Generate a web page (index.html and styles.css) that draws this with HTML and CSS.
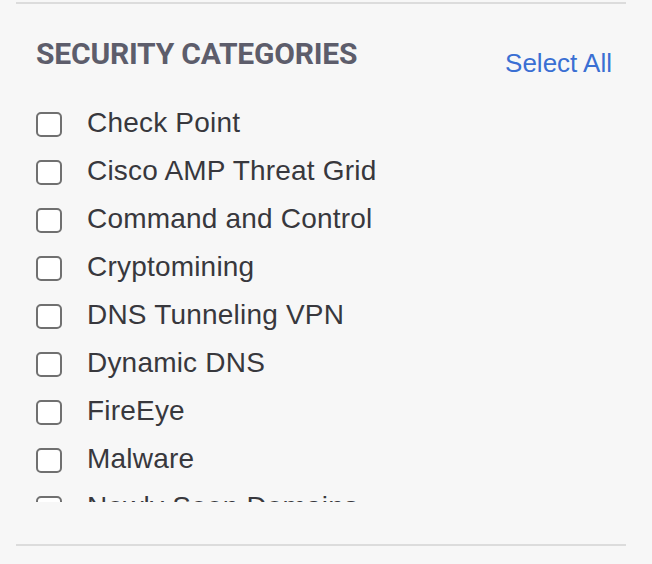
FILE: index.html
```html
<!DOCTYPE html>
<html>
<head>
<meta charset="utf-8">
<link rel="stylesheet" href="styles.css">
</head>
<body>
<section class="panel">
  <div class="panel-header">
    <h2 class="panel-title">SECURITY CATEGORIES</h2>
    <a class="select-all" href="#">Select All</a>
  </div>
  <ul class="cat-list">
    <li class="cat-item"><span class="box"></span><span class="label">Check Point</span></li>
    <li class="cat-item"><span class="box"></span><span class="label">Cisco AMP Threat Grid</span></li>
    <li class="cat-item"><span class="box"></span><span class="label">Command and Control</span></li>
    <li class="cat-item"><span class="box"></span><span class="label">Cryptomining</span></li>
    <li class="cat-item"><span class="box"></span><span class="label">DNS Tunneling VPN</span></li>
    <li class="cat-item"><span class="box"></span><span class="label">Dynamic DNS</span></li>
    <li class="cat-item"><span class="box"></span><span class="label">FireEye</span></li>
    <li class="cat-item"><span class="box"></span><span class="label">Malware</span></li>
    <li class="cat-item"><span class="box"></span><span class="label">Newly Seen Domains</span></li>
  </ul>
</section>
</body>
</html>
```
FILE: styles.css
```css
html, body {
  margin: 0;
  padding: 0;
  background: #f7f7f7;
}
body {
  width: 652px;
  height: 564px;
  overflow: hidden;
}
.panel {
  margin: 2px 26px 0 16px;
  border-top: 2px solid #dcdcdc;
  border-bottom: 2px solid #dcdcdc;
  padding: 32px 14px 42px 20px;
}
.panel-header {
  display: flex;
  justify-content: space-between;
  align-items: flex-start;
  height: 36px;
}
.panel-title {
  margin: 0;
  font-family: Roboto, "Liberation Sans", sans-serif;
  font-weight: 700;
  font-size: 30px;
  line-height: 36px;
  color: #5d5d6b;
  letter-spacing: -0.2px;
}
.select-all {
  margin-top: 12px;
  font-family: "Liberation Sans", Arial, sans-serif;
  font-size: 26px;
  line-height: 30px;
  color: #3a6fd3;
  text-decoration: none;
}
.cat-list {
  list-style: none;
  margin: 27px 0 0 0;
  padding: 0;
  height: 403px;
  overflow: hidden;
}
.cat-item {
  display: flex;
  align-items: center;
  height: 48px;
}
.box {
  box-sizing: border-box;
  width: 26px;
  height: 25px;
  margin-top: 2px;
  border: 2px solid #707070;
  border-radius: 5px;
  background: #ffffff;
  flex: none;
}
.label {
  margin-left: 25px;
  font-family: "Liberation Sans", Arial, sans-serif;
  font-size: 28px;
  line-height: 48px;
  letter-spacing: 0.2px;
  color: #38383d;
}
```
